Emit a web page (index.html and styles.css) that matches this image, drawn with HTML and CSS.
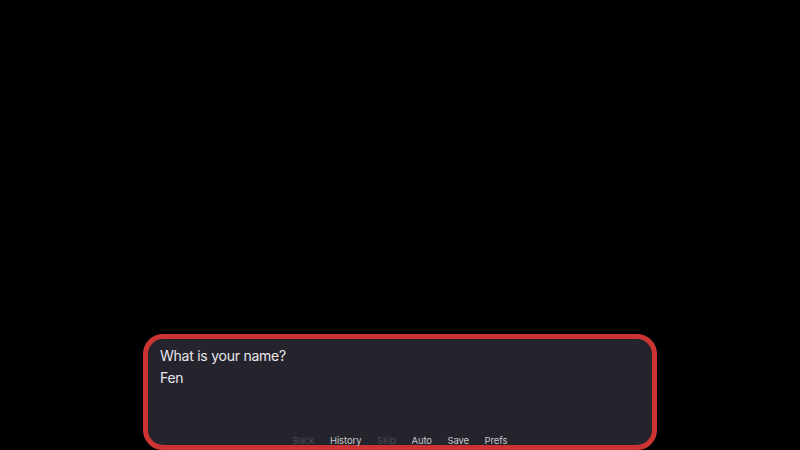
FILE: index.html
```html
<!DOCTYPE html>
<html>
<head>
<meta charset="utf-8">
<link rel="stylesheet" href="styles.css">
</head>
<body>
<div class="stage">
  <div class="dialog">
    <div class="say">What is your name?</div>
    <div class="input">Fen</div>
    <div class="quick">
      <span class="qbtn off">Back</span>
      <span class="qbtn">History</span>
      <span class="qbtn off">Skip</span>
      <span class="qbtn">Auto</span>
      <span class="qbtn">Save</span>
      <span class="qbtn">Prefs</span>
    </div>
  </div>
</div>
</body>
</html>
```
FILE: styles.css
```css
html, body {
  margin: 0;
  padding: 0;
  background: #000;
}
.stage {
  width: 800px;
  height: 450px;
  display: flex;
  flex-direction: column;
  justify-content: flex-end;
  align-items: center;
  overflow: hidden;
}
.dialog {
  box-sizing: border-box;
  width: 514px;
  height: 116px;
  border: 5px solid #cc3434;
  border-radius: 20px;
  background: #25242d;
  padding: 7px 12px 0 12px;
  display: flex;
  flex-direction: column;
  font-family: Inter, "Noto Sans", sans-serif;
  color: #e8e8ec;
}
.say {
  font-size: 14px;
  line-height: 20px;
  letter-spacing: -0.25px;
}
.input {
  font-size: 14px;
  line-height: 20px;
  margin-top: 2px;
  letter-spacing: -0.25px;
}
.quick {
  margin-top: auto;
  display: flex;
  justify-content: center;
  gap: 15.5px;
  font-size: 9.5px;
  line-height: 14px;
  margin-bottom: -3px;
  letter-spacing: -0.1px;
}
.qbtn {
  color: #c8c8cc;
}
.qbtn.off {
  color: #4a4a52;
}
```
